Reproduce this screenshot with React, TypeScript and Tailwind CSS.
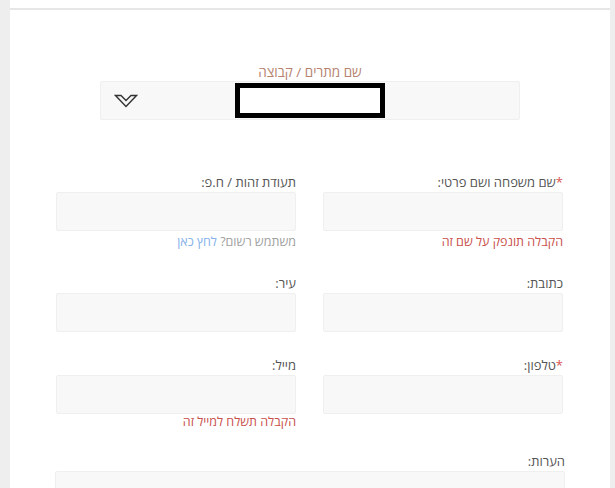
import React from "react";

const Chevron = () => (
  <svg width="24" height="14" viewBox="0 0 24 14" fill="none">
    <path d="M1.5 1.5 L7 1.5 L12 6.5 L17 1.5 L22.5 1.5 L12 12.5 Z" stroke="#333" strokeWidth="1.4" strokeLinejoin="miter" />
  </svg>
);

const Input = ({ h = "h-[39px]" }: { h?: string }) => (
  <div className={`w-full ${h} bg-[#f8f8f8] border border-[#efefef] rounded-[2px]`} />
);

const Label = ({ text, req, lh = "leading-[20px]" }: { text: string; req?: boolean; lh?: string }) => (
  <div className={`text-[13px] ${lh} text-[#555]`}>
    {req && <span className="text-[#d9534f]">*</span>}
    {text}
  </div>
);

export default function App() {
  return (
    <div
      className="h-[488px] overflow-hidden bg-[#eeeeee] pl-[10px] pr-[5px]"
      style={{ fontFamily: '"Open Sans", "DejaVu Sans", sans-serif' }}
    >
      <div className="h-[8px] bg-white" />
      <div className="h-[2px] bg-[#e6e6e6]" />
      <div className="bg-white h-[478px] pt-[53px]">
        <div dir="rtl" className="text-center text-[13.5px] leading-[18px] text-[#b5836f]">שם מתרים / קבוצה</div>
        <div className="ml-[90px] w-[420px] h-[39px] bg-[#f8f8f8] border border-[#efefef] rounded-[2px] flex items-center">
          <div className="w-[37px] flex justify-end">
            <Chevron />
          </div>
          <div className="ml-[97px] w-[150px] h-[35px] border-[5px] border-black bg-white" />
        </div>

        <div dir="rtl" className="ml-[46px] w-[507px] mt-[52px] grid grid-cols-2 gap-x-[27px]">
          <div>
            <Label text="שם משפחה ושם פרטי:" req />
            <Input />
            <div className="text-[12.5px] leading-[20px] mt-[1px] text-[#c9504c]">הקבלה תונפק על שם זה</div>
          </div>
          <div>
            <Label text="תעודת זהות / ח.פ:" />
            <Input />
            <div className="text-[12.5px] leading-[20px] mt-[1px] text-[#a0a0a0]">
              משתמש רשום? <span className="text-[#85b2ea]">לחץ כאן</span>
            </div>
          </div>
        </div>

        <div dir="rtl" className="ml-[46px] w-[507px] mt-[21px] grid grid-cols-2 gap-x-[27px]">
          <div>
            <Label text="כתובת:" />
            <Input />
          </div>
          <div>
            <Label text="עיר:" />
            <Input />
          </div>
        </div>

        <div dir="rtl" className="ml-[46px] w-[507px] mt-[23px] grid grid-cols-2 gap-x-[27px]">
          <div>
            <Label text="טלפון:" req />
            <Input />
          </div>
          <div>
            <Label text="מייל:" />
            <Input />
            <div className="text-[12.5px] leading-[20px] mt-[-2px] text-[#c9504c]">הקבלה תשלח למייל זה</div>
          </div>
        </div>

        <div dir="rtl" className="ml-[45px] w-[510px] mt-[22px]">
          <Label text="הערות:" lh="leading-[14px]" />
          <div className="mt-[3px]">
            <Input h="h-[60px]" />
          </div>
        </div>
      </div>
    </div>
  );
}
